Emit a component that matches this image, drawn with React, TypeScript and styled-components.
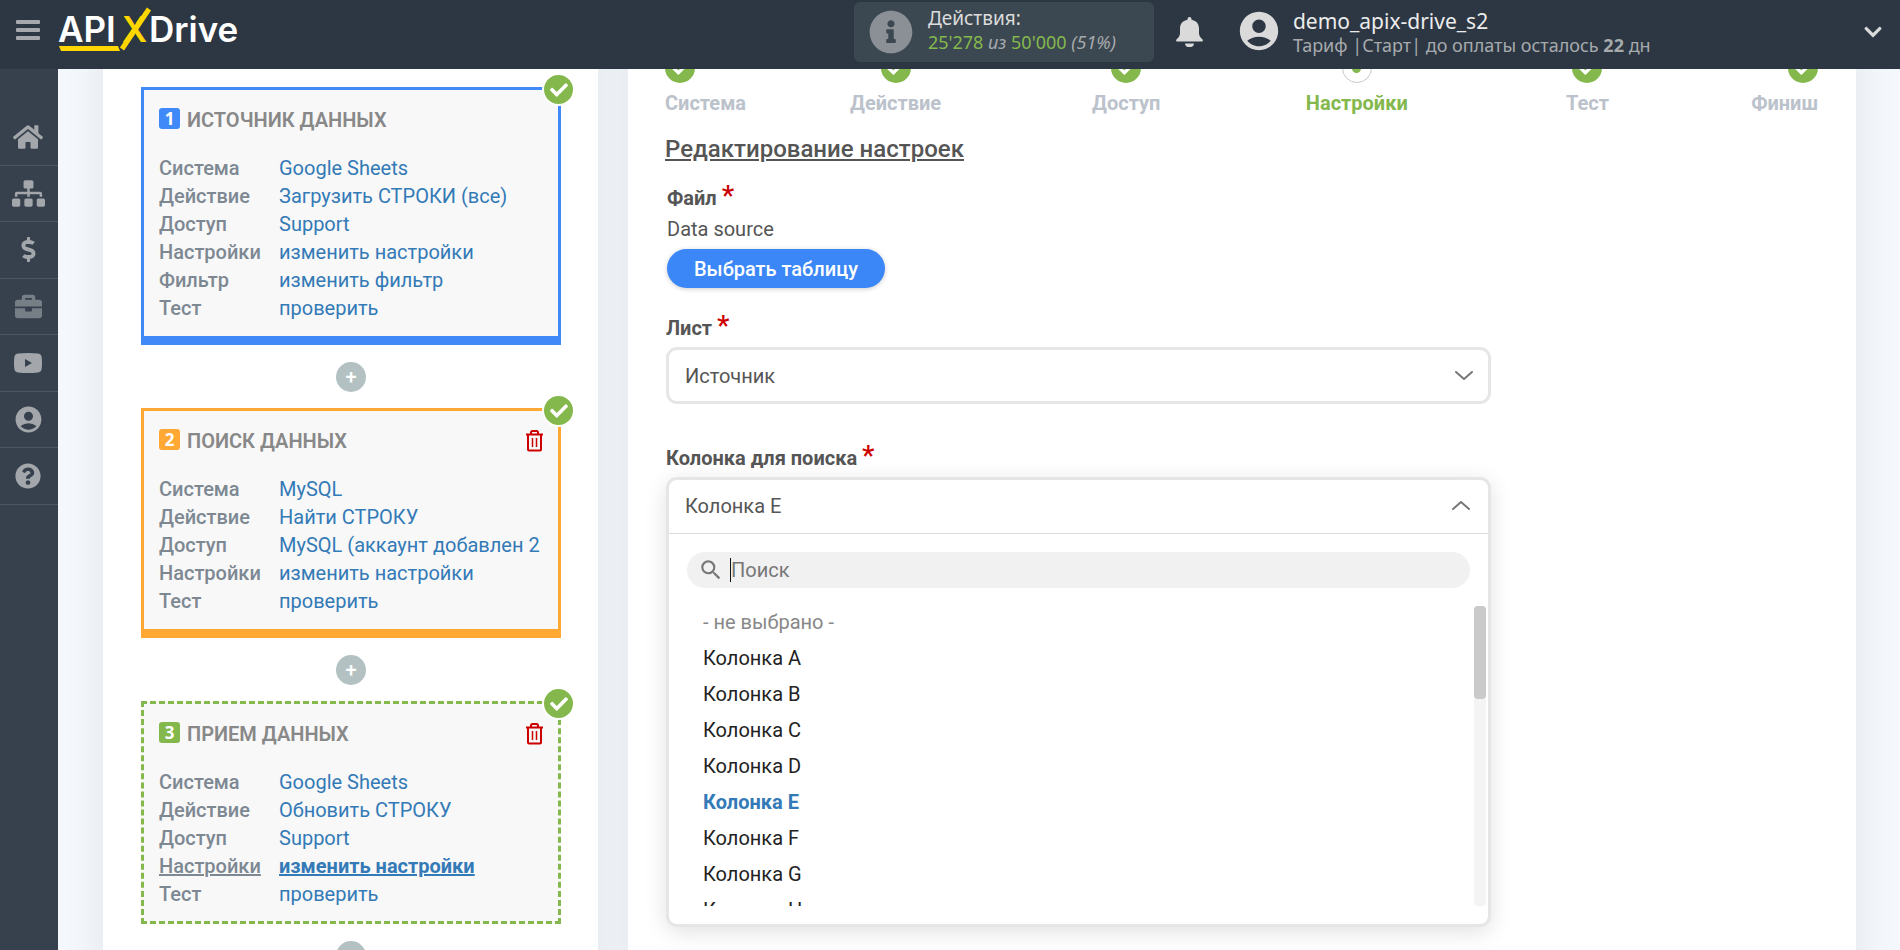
import React from 'react';
import styled, { createGlobalStyle } from 'styled-components';
import {
  FaHome,
  FaSitemap,
  FaDollarSign,
  FaBriefcase,
  FaQuestionCircle,
  FaInfoCircle,
  FaCheck,
  FaChevronDown,
} from 'react-icons/fa';
import { MdAccountCircle, MdSearch } from 'react-icons/md';

const GlobalStyle = createGlobalStyle`
  *, *::before, *::after { box-sizing: border-box; }
  body {
    margin: 0;
    background: #f4f7fc;
    color: #555;
    font-family: Roboto, "Liberation Sans", sans-serif;
    font-size: 20px;
  }
  a { color: #337ab7; text-decoration: none; }
  button, input, select { font: inherit; color: inherit; }
  button { cursor: pointer; }
`;

const Page = styled.div`
  height: 100vh;
  overflow: hidden;
`;

/* ---------- top bar ---------- */

const TopBar = styled.header`
  position: fixed;
  top: 0;
  left: 0;
  right: 0;
  z-index: 10;
  height: 69px;
  display: flex;
  align-items: flex-start;
  background: #2c3743;
  font-family: "Noto Sans", "Open Sans", sans-serif;
`;

const Brand = styled.div`
  flex: 9 1 0;
  display: flex;
  align-items: flex-start;
`;

const MenuButton = styled.button`
  display: flex;
  flex-direction: column;
  gap: 4px;
  margin: 20px 18px 0 16px;
  padding: 0;
  border: 0;
  background: none;
`;

const Bar = styled.span`
  width: 24px;
  height: 4px;
  border-radius: 1px;
  background: #a5a8ac;
`;

const Counter = styled.section`
  display: flex;
  gap: 15px;
  width: 300px;
  height: 60px;
  margin-top: 2px;
  padding: 0 15px;
  border-radius: 6px;
  background: #3c4851;
  color: #dcdcdc;
`;

const CounterIcon = styled(FaInfoCircle)`
  width: 44px;
  height: 44px;
  margin-top: 8px;
  color: #8b8f96;
`;

const CounterTitle = styled.div`
  font-size: 19px;
  line-height: 28px;
  margin-top: 2px;
`;

const CounterValue = styled.div`
  font-size: 18px;
  line-height: 20px;
  color: #a7aaad;
`;

const Green = styled.span`
  color: #84b84c;
`;

const BellButton = styled.button`
  display: flex;
  margin: 17px 33px 0 22px;
  padding: 0;
  border: 0;
  background: none;
  color: #dadada;
`;

const Account = styled.div`
  flex: 7 1 0;
  display: flex;
  align-items: flex-start;
  gap: 11px;
  color: #dadada;
`;

const AccountIcon = styled(MdAccountCircle)`
  width: 46px;
  height: 46px;
  margin-top: 8px;
`;

const AccountText = styled.div`
  flex: 1;
`;

const AccountName = styled.div`
  margin-top: 7px;
  font-size: 21px;
  line-height: 28px;
  color: #ececec;
`;

const AccountPlan = styled.div`
  font-size: 18px;
  line-height: 20px;
  color: #a7aaad;
`;

const ExpandButton = styled.button`
  margin: 22px 17px 0 0;
  padding: 0;
  border: 0;
  background: none;
  color: #dadada;
  display: flex;
`;

/* ---------- side bar ---------- */

const SideBar = styled.nav`
  position: fixed;
  top: 69px;
  bottom: 0;
  left: 0;
  z-index: 9;
  width: 58px;
  padding-top: 40px;
  background: #36414d;
`;

const SideList = styled.ul`
  display: grid;
  grid-template-rows: repeat(7, 1fr);
  height: 396px;
  margin: 0;
  padding: 0;
  list-style: none;
`;

const SideItem = styled.li`
  border-bottom: 1px solid #4b5763;
`;

const SideLink = styled.a<{ $dim?: boolean }>`
  display: flex;
  align-items: center;
  justify-content: center;
  height: 100%;
  padding-right: 2px;
  color: ${(p) => (p.$dim ? '#767e86' : '#a3a7ab')};
`;

/* ---------- page body ---------- */

const Main = styled.main`
  display: flex;
  align-items: stretch;
  gap: 30px;
  min-height: 100vh;
  margin-left: 58px;
  padding: 0 44px 0 45px;
`;

const Panel = styled.section`
  background: #fff;
  box-shadow: 0 0 40px rgba(0, 0, 0, 0.08);
`;

const FlowPanel = styled(Panel)`
  flex: 0 0 495px;
  display: flex;
  flex-direction: column;
  align-items: stretch;
  padding: 87px 37px 0 38px;
`;

const FormPanel = styled(Panel)`
  flex: 1;
  padding: 53px 38px 0 37px;
`;

/* ---------- flow cards ---------- */

const Card = styled.article<{ $color: string; $dashed?: boolean }>`
  position: relative;
  padding: ${(p) => (p.$dashed ? '10px 15px 13px' : '10px 15px 14px')};
  border: 3px ${(p) => (p.$dashed ? 'dashed' : 'solid')} ${(p) => p.$color};
  border-bottom-width: ${(p) => (p.$dashed ? '3px' : '9px')};
  background: #f8f8f8;
`;

const CardHead = styled.header`
  display: flex;
  align-items: center;
  height: 40px;
  margin-bottom: 14px;
`;

const CardNumber = styled.span<{ $color: string }>`
  width: 21px;
  height: 21px;
  margin: 0 7px 3px 0;
  border-radius: 3px;
  background: ${(p) => p.$color};
  color: #fff;
  font-family: "Noto Sans", sans-serif;
  font-size: 17px;
  font-weight: 700;
  line-height: 21px;
  text-align: center;
`;

const CardTitle = styled.h2`
  flex: 1;
  margin: 0;
  color: #888;
  font-size: 20px;
  font-weight: 600;
  text-transform: uppercase;
`;

const TrashButton = styled.button`
  display: flex;
  padding: 0;
  border: 0;
  background: none;
  color: #c00;
`;

const Details = styled.dl`
  margin: 0;
`;

const Detail = styled.div`
  display: grid;
  grid-template-columns: 120px 1fr;
  line-height: 28px;
`;

const Term = styled.dt<{ $current?: boolean }>`
  color: #7d8893;
  font-weight: 500;
  text-decoration: ${(p) => (p.$current ? 'underline' : 'none')};
`;

const Value = styled.dd<{ $current?: boolean }>`
  margin: 0;
  white-space: nowrap;
  font-weight: ${(p) => (p.$current ? 700 : 400)};
  a { text-decoration: ${(p) => (p.$current ? 'underline' : 'none')}; }
`;

const DoneMark = styled.span`
  position: absolute;
  top: -17px;
  right: -17px;
  display: flex;
  align-items: center;
  justify-content: center;
  width: 33px;
  height: 33px;
  border: 2px solid #fff;
  border-radius: 50%;
  background: #84b84c;
  color: #fff;
`;

const AddButton = styled.button`
  align-self: center;
  width: 30px;
  height: 30px;
  margin: 17px 0 16px;
  padding: 0;
  border: 0;
  border-radius: 50%;
  background: #b3c1c2;
  color: #fff;
  font-size: 20px;
  font-weight: 500;
  line-height: 30px;
`;

/* ---------- steps ---------- */

const Steps = styled.ol`
  display: grid;
  grid-template-columns: 1fr 2fr 2fr 2fr 2fr 1fr;
  margin: 0;
  padding: 0;
  list-style: none;
`;

const Step = styled.li<{ $align: string }>`
  display: flex;
  flex-direction: column;
  align-items: ${(p) => p.$align};
  gap: 8px;
`;

const StepMark = styled.span<{ $current?: boolean }>`
  display: flex;
  align-items: center;
  justify-content: center;
  width: 30px;
  height: 30px;
  border: ${(p) => (p.$current ? '1px solid #c8c8c8' : '0')};
  border-radius: 50%;
  background: ${(p) => (p.$current ? '#fff' : '#84b84c')};
  color: #fff;
`;

const StepDot = styled.span`
  width: 9px;
  height: 9px;
  border-radius: 50%;
  background: #84b84c;
`;

const StepLabel = styled.a<{ $current?: boolean }>`
  font-weight: 700;
  line-height: 24px;
  color: ${(p) => (p.$current ? '#84b84c' : '#bbc2cb')};
`;

/* ---------- form ---------- */

const Heading = styled.h1`
  margin: 18px 0 0;
  font-size: 24px;
  font-weight: 500;
  line-height: 32px;
  color: #555;
  text-decoration: underline;
`;

const Field = styled.div`
  width: 825px;
  max-width: 100%;
  margin-left: 1px;
`;

const FileField = styled(Field)`
  margin-top: 18px;
  padding-left: 1px;
`;

const SheetField = styled(Field)`
  margin-top: 26px;
`;

const ColumnField = styled(Field)`
  margin-top: 40px;
`;

const Label = styled.label`
  display: block;
  height: 33px;
  font-weight: 700;
  line-height: 28px;
`;

const FileLabel = styled.div`
  height: 30px;
  font-size: 20px;
  font-weight: 700;
  line-height: 30px;
`;

const Star = styled.span`
  color: #c00;
  font-size: 28px;
  font-weight: 500;
  line-height: 0;
`;

const FileName = styled.div`
  line-height: 32px;
`;

const PickButton = styled.button`
  width: 218px;
  height: 39px;
  margin-top: 4px;
  padding: 0;
  border: 0;
  border-radius: 20px;
  background: #3b87f8;
  color: #fff;
  font-weight: 500;
  box-shadow: 0 1px 5px rgba(0, 0, 0, 0.2);
`;

const SelectWrap = styled.div`
  position: relative;
  color: #777;
`;

const SelectArrow = styled.span`
  position: absolute;
  top: 24px;
  right: 18px;
  display: flex;
  pointer-events: none;
`;

const SheetSelect = styled.select`
  appearance: none;
  display: block;
  width: 100%;
  height: 57px;
  padding: 0 16px;
  border: 3px solid #e6e6e6;
  border-radius: 11px;
  background: #fff;
  color: #555;
`;

const Dropdown = styled.div`
  height: 450px;
  display: flex;
  flex-direction: column;
  border: 3px solid #e6e6e6;
  border-radius: 11px;
  background: #fff;
  box-shadow: 0 5px 22px rgba(0, 0, 0, 0.12);
`;

const DropdownButton = styled.button`
  display: flex;
  align-items: center;
  justify-content: space-between;
  height: 54px;
  flex: none;
  padding: 0 18px 2px 16px;
  border: 0;
  border-bottom: 1px solid #dcdcdc;
  background: none;
  text-align: left;
`;

const SearchBox = styled.label`
  display: flex;
  align-items: center;
  height: 36px;
  flex: none;
  margin: 18px 18px 16px;
  padding: 0 11px;
  border-radius: 18px;
  background: #f1f1f1;
  color: #777;
`;

const Caret = styled.span`
  width: 1px;
  height: 24px;
  margin-left: 6px;
  background: #111;
`;

const SearchInput = styled.input`
  flex: 1;
  padding: 0;
  border: 0;
  outline: 0;
  background: none;
  &::placeholder { color: #777; opacity: 1; }
`;

const ListArea = styled.div`
  display: flex;
  flex: none;
  height: 302px;
  padding-right: 2px;
`;

const OptionList = styled.ul`
  flex: 1;
  margin: 0;
  padding: 0 0 0 34px;
  overflow: hidden;
  list-style: none;
`;

const Option = styled.li<{ $tone?: 'empty' | 'selected' }>`
  height: 36px;
  line-height: 36px;
  color: ${(p) => (p.$tone === 'empty' ? '#888' : p.$tone === 'selected' ? '#337ab7' : '#222')};
  font-weight: ${(p) => (p.$tone === 'selected' ? 700 : 400)};
`;

const Track = styled.div`
  width: 12px;
  margin-top: 2px;
  border-radius: 4px;
  background: #f4f4f4;
`;

const Thumb = styled.div`
  height: 93px;
  border-radius: 4px;
  background: #cacaca;
`;

/* ---------- drawings ---------- */

const Logo = () => (
  <svg width="184" height="56" viewBox="58 0 184 56" role="img" aria-label="APIXDrive">
    <g fontFamily="Inter, sans-serif" fontWeight="600" fontSize="35" fill="#fff">
      <text x="58" y="42">API</text>
      <text x="122" y="42" fill="#ffd600">X</text>
      <text x="149" y="42">Drive</text>
    </g>
    <path d="M149 9L122 49" stroke="#ffd600" strokeWidth="5" />
    <path d="M59 46H118L120 51H61Z" fill="#ffd600" />
  </svg>
);

const BellIcon = () => (
  <svg width="27" height="30" viewBox="0 0 27 30" fill="currentColor" aria-hidden="true">
    <path d="M13.500 0a2 2 0 0 1 2 2v.7C20.500 3.800 23 7 23 11.500V16c0 2.500 1 4.300 3.300 6.300.8.7.9 2.200-.6 2.200H1.300c-1.500 0-1.400-1.500-.6-2.200C3 20.300 4 18.500 4 16v-4.500C4 7 6.500 3.800 11.500 2.700V2a2 2 0 0 1 2-2z" />
    <path d="M9 26.500h9a4.500 3.800 0 0 1-9 0z" />
  </svg>
);

const VideoIcon = () => (
  <svg width="28" height="20" viewBox="0 0 28 20" aria-hidden="true">
    <path
      fill="currentColor"
      fillRule="evenodd"
      d="M4 .5Q14-.5 24 .5 27.500 1 27.700 4.500 28.300 10 27.700 15.500 27.500 19 24 19.500 14 20.500 4 19.500.5 19 .3 15.500-.3 10 .3 4.500.5 1 4 .5ZM11 6V14L18 10Z"
    />
  </svg>
);

const TrashIcon = () => (
  <svg width="17" height="22" viewBox="0 0 17 22" fill="none" stroke="currentColor" strokeWidth="2" aria-hidden="true">
    <path d="M0 4.500H17M5 4V2.500Q5 1 6.500 1H10.500Q12 1 12 2.500V4M2 5V19.500Q2 20.500 3 20.500H14Q15 20.500 15 19.500V5" />
    <path d="M6.500 8V17M10.500 8V17" strokeWidth="1.500" />
  </svg>
);

const Chevron = ({ up }: { up?: boolean }) => (
  <svg width="18" height="10" viewBox="0 0 18 10" fill="none" stroke="#777" strokeWidth="2" strokeLinecap="round" strokeLinejoin="round" aria-hidden="true">
    <path d={up ? 'M1 8L9 1L17 8' : 'M1 1L9 8L17 1'} />
  </svg>
);

/* ---------- data ---------- */

const sideItems = [
  { name: 'Главная', icon: <FaHome size={30} /> },
  { name: 'Связи', icon: <FaSitemap size={33} /> },
  { name: 'Оплата', icon: <FaDollarSign size={25} /> },
  { name: 'Проекты', icon: <FaBriefcase size={27} />, dim: true },
  { name: 'Видео', icon: <VideoIcon /> },
  { name: 'Профиль', icon: <MdAccountCircle size={31} /> },
  { name: 'Помощь', icon: <FaQuestionCircle size={26} /> },
];

type FlowCard = {
  title: string;
  color: string;
  dashed?: boolean;
  removable?: boolean;
  current?: string;
  rows: [string, string][];
};

const cards: FlowCard[] = [
  {
    title: 'Источник данных',
    color: '#3f8af8',
    rows: [
      ['Система', 'Google Sheets'],
      ['Действие', 'Загрузить СТРОКИ (все)'],
      ['Доступ', 'Support'],
      ['Настройки', 'изменить настройки'],
      ['Фильтр', 'изменить фильтр'],
      ['Тест', 'проверить'],
    ],
  },
  {
    title: 'Поиск данных',
    color: '#ffa834',
    removable: true,
    rows: [
      ['Система', 'MySQL'],
      ['Действие', 'Найти СТРОКУ'],
      ['Доступ', 'MySQL (аккаунт добавлен 2'],
      ['Настройки', 'изменить настройки'],
      ['Тест', 'проверить'],
    ],
  },
  {
    title: 'Прием данных',
    color: '#84b84c',
    dashed: true,
    removable: true,
    current: 'Настройки',
    rows: [
      ['Система', 'Google Sheets'],
      ['Действие', 'Обновить СТРОКУ'],
      ['Доступ', 'Support'],
      ['Настройки', 'изменить настройки'],
      ['Тест', 'проверить'],
    ],
  },
];

const steps = ['Система', 'Действие', 'Доступ', 'Настройки', 'Тест', 'Финиш'];
const columns = ['A', 'B', 'C', 'D', 'E', 'F', 'G', 'H'];

const stepAlign = (i: number) => (i === 0 ? 'flex-start' : i === steps.length - 1 ? 'flex-end' : 'center');

export default function App() {
  return (
    <>
      <GlobalStyle />
      <Page>
        <TopBar>
          <Brand>
            <MenuButton aria-label="Меню">
              <Bar />
              <Bar />
              <Bar />
            </MenuButton>
            <Logo />
          </Brand>
          <Counter>
            <CounterIcon />
            <div>
              <CounterTitle>Действия:</CounterTitle>
              <CounterValue>
                <Green>25'278</Green> <i>из</i> <Green>50'000</Green> <i>(51%)</i>
              </CounterValue>
            </div>
          </Counter>
          <BellButton aria-label="Уведомления">
            <BellIcon />
          </BellButton>
          <Account>
            <AccountIcon />
            <AccountText>
              <AccountName>demo_apix-drive_s2</AccountName>
              <AccountPlan>
                Тариф |Старт| до оплаты осталось <b>22</b> дн
              </AccountPlan>
            </AccountText>
            <ExpandButton aria-label="Развернуть">
              <FaChevronDown size={20} />
            </ExpandButton>
          </Account>
        </TopBar>

        <SideBar>
          <SideList>
            {sideItems.map((item) => (
              <SideItem key={item.name}>
                <SideLink href="#" aria-label={item.name} $dim={item.dim}>
                  {item.icon}
                </SideLink>
              </SideItem>
            ))}
          </SideList>
        </SideBar>

        <Main>
          <FlowPanel>
            {cards.map((card, i) => (
              <React.Fragment key={card.title}>
                <Card $color={card.color} $dashed={card.dashed}>
                  <CardHead>
                    <CardNumber $color={card.color}>{i + 1}</CardNumber>
                    <CardTitle>{card.title}</CardTitle>
                    {card.removable && (
                      <TrashButton aria-label="Удалить">
                        <TrashIcon />
                      </TrashButton>
                    )}
                  </CardHead>
                  <Details>
                    {card.rows.map(([term, value]) => (
                      <Detail key={term}>
                        <Term $current={term === card.current}>{term}</Term>
                        <Value $current={term === card.current}>
                          <a href="#">{value}</a>
                        </Value>
                      </Detail>
                    ))}
                  </Details>
                  <DoneMark>
                    <FaCheck size={18} />
                  </DoneMark>
                </Card>
                <AddButton aria-label="Добавить">+</AddButton>
              </React.Fragment>
            ))}
          </FlowPanel>

          <FormPanel>
            <Steps>
              {steps.map((name, i) => (
                <Step key={name} $align={stepAlign(i)}>
                  <StepMark $current={name === 'Настройки'}>
                    {name === 'Настройки' ? <StepDot /> : <FaCheck size={17} />}
                  </StepMark>
                  <StepLabel href="#" $current={name === 'Настройки'}>
                    {name}
                  </StepLabel>
                </Step>
              ))}
            </Steps>
            <Heading>Редактирование настроек</Heading>

            <FileField>
              <FileLabel id="file-label">
                Файл <Star>*</Star>
              </FileLabel>
              <FileName>Data source</FileName>
              <PickButton aria-describedby="file-label">Выбрать таблицу</PickButton>
            </FileField>

            <SheetField>
              <Label htmlFor="sheet">
                Лист <Star>*</Star>
              </Label>
              <SelectWrap>
                <SheetSelect id="sheet" defaultValue="Источник">
                  <option>Источник</option>
                </SheetSelect>
                <SelectArrow>
                  <Chevron />
                </SelectArrow>
              </SelectWrap>
            </SheetField>

            <ColumnField>
              <Label htmlFor="column">
                Колонка для поиска <Star>*</Star>
              </Label>
              <Dropdown>
                <DropdownButton id="column" aria-haspopup="listbox" aria-expanded="true">
                  Колонка E
                  <Chevron up />
                </DropdownButton>
                <SearchBox>
                  <MdSearch size={26} />
                  <Caret />
                  <SearchInput type="text" placeholder="Поиск" aria-label="Поиск" />
                </SearchBox>
                <ListArea>
                  <OptionList role="listbox">
                    <Option role="option" $tone="empty">- не выбрано -</Option>
                    {columns.map((c) => (
                      <Option key={c} role="option" aria-selected={c === 'E'} $tone={c === 'E' ? 'selected' : undefined}>
                        Колонка {c}
                      </Option>
                    ))}
                  </OptionList>
                  <Track>
                    <Thumb />
                  </Track>
                </ListArea>
              </Dropdown>
            </ColumnField>
          </FormPanel>
        </Main>
      </Page>
    </>
  );
}
